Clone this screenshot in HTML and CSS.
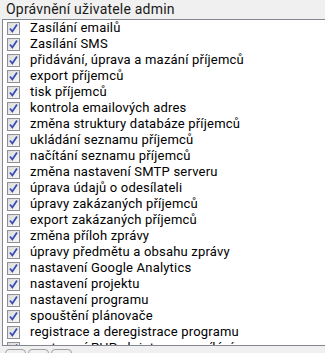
FILE: index.html
```html
<!DOCTYPE html>
<html lang="cs">
<head>
  <meta charset="UTF-8" />
  <title>Oprávnění uživatele</title>
  <link rel="stylesheet" href="styles.css">
</head>
<body>
  <div class="nadpis">Oprávnění uživatele admin</div>

  <div class="seznam">
    <div class="polozka"><span class="zaskrt"><svg viewBox="0 0 11 11"><path d="M2 5.5 L4.3 8.5 L9 1.5" /></svg></span>Zasílání emailů</div>
    <div class="polozka"><span class="zaskrt"><svg viewBox="0 0 11 11"><path d="M2 5.5 L4.3 8.5 L9 1.5" /></svg></span>Zasílání SMS</div>
    <div class="polozka"><span class="zaskrt"><svg viewBox="0 0 11 11"><path d="M2 5.5 L4.3 8.5 L9 1.5" /></svg></span>přidávání, úprava a mazání příjemců</div>
    <div class="polozka"><span class="zaskrt"><svg viewBox="0 0 11 11"><path d="M2 5.5 L4.3 8.5 L9 1.5" /></svg></span>export příjemců</div>
    <div class="polozka"><span class="zaskrt"><svg viewBox="0 0 11 11"><path d="M2 5.5 L4.3 8.5 L9 1.5" /></svg></span>tisk příjemců</div>
    <div class="polozka"><span class="zaskrt"><svg viewBox="0 0 11 11"><path d="M2 5.5 L4.3 8.5 L9 1.5" /></svg></span>kontrola emailových adres</div>
    <div class="polozka"><span class="zaskrt"><svg viewBox="0 0 11 11"><path d="M2 5.5 L4.3 8.5 L9 1.5" /></svg></span>změna struktury databáze příjemců</div>
    <div class="polozka"><span class="zaskrt"><svg viewBox="0 0 11 11"><path d="M2 5.5 L4.3 8.5 L9 1.5" /></svg></span>ukládání seznamu příjemců</div>
    <div class="polozka"><span class="zaskrt"><svg viewBox="0 0 11 11"><path d="M2 5.5 L4.3 8.5 L9 1.5" /></svg></span>načítání seznamu příjemců</div>
    <div class="polozka"><span class="zaskrt"><svg viewBox="0 0 11 11"><path d="M2 5.5 L4.3 8.5 L9 1.5" /></svg></span>změna nastavení SMTP serveru</div>
    <div class="polozka"><span class="zaskrt"><svg viewBox="0 0 11 11"><path d="M2 5.5 L4.3 8.5 L9 1.5" /></svg></span>úprava údajů o odesílateli</div>
    <div class="polozka"><span class="zaskrt"><svg viewBox="0 0 11 11"><path d="M2 5.5 L4.3 8.5 L9 1.5" /></svg></span>úpravy zakázaných příjemců</div>
    <div class="polozka"><span class="zaskrt"><svg viewBox="0 0 11 11"><path d="M2 5.5 L4.3 8.5 L9 1.5" /></svg></span>export zakázaných příjemců</div>
    <div class="polozka"><span class="zaskrt"><svg viewBox="0 0 11 11"><path d="M2 5.5 L4.3 8.5 L9 1.5" /></svg></span>změna příloh zprávy</div>
    <div class="polozka"><span class="zaskrt"><svg viewBox="0 0 11 11"><path d="M2 5.5 L4.3 8.5 L9 1.5" /></svg></span>úpravy předmětu a obsahu zprávy</div>
    <div class="polozka"><span class="zaskrt"><svg viewBox="0 0 11 11"><path d="M2 5.5 L4.3 8.5 L9 1.5" /></svg></span>nastavení Google Analytics</div>
    <div class="polozka"><span class="zaskrt"><svg viewBox="0 0 11 11"><path d="M2 5.5 L4.3 8.5 L9 1.5" /></svg></span>nastavení projektu</div>
    <div class="polozka"><span class="zaskrt"><svg viewBox="0 0 11 11"><path d="M2 5.5 L4.3 8.5 L9 1.5" /></svg></span>nastavení programu</div>
    <div class="polozka"><span class="zaskrt"><svg viewBox="0 0 11 11"><path d="M2 5.5 L4.3 8.5 L9 1.5" /></svg></span>spouštění plánovače</div>
    <div class="polozka"><span class="zaskrt"><svg viewBox="0 0 11 11"><path d="M2 5.5 L4.3 8.5 L9 1.5" /></svg></span>registrace a deregistrace programu</div>
    <div class="polozka"><span class="zaskrt"><svg viewBox="0 0 11 11"><path d="M2 5.5 L4.3 8.5 L9 1.5" /></svg></span>nastavení PHP skriptu pro zasílání</div>
  </div>

  <div class="tlacitka">
    <span class="tl"></span>
    <span class="tl"></span>
    <span class="tl"></span>
  </div>
</body>
</html>
```

FILE: styles.css
```css
body {
  margin: 0;
  background: #f0f0f0;
  font-family: Roboto, "Noto Sans", sans-serif;
  font-size: 13px;
  letter-spacing: 0.2px;
  color: #000;
  height: 353px;
  overflow: hidden;
}

.nadpis {
  height: 19px;
  line-height: 19px;
  padding-left: 6px;
  font-size: 14px;
  color: #1a1a1a;
}

.seznam {
  margin-left: 2px;
  height: 327px;
  box-sizing: border-box;
  border: 1px solid #828790;
  border-right: none;
  background: #fff;
  overflow: hidden;
}

.polozka {
  display: flex;
  align-items: center;
  height: 16px;
  line-height: 16px;
  padding-left: 4px;
  white-space: nowrap;
}

.zaskrt {
  width: 13px;
  height: 13px;
  box-sizing: border-box;
  border: 1px solid #8e8f8f;
  background: linear-gradient(to bottom right, #dcdcdc, #f7f7f7);
  margin-right: 10px;
  flex-shrink: 0;
  display: flex;
  align-items: center;
  justify-content: center;
}

.zaskrt svg {
  width: 11px;
  height: 11px;
}

.zaskrt path {
  fill: none;
  stroke: #3c4fb0;
  stroke-width: 1.8;
}

.tlacitka {
  display: flex;
  gap: 2px;
  padding: 3px 0 0 5px;
}

.tl {
  width: 21px;
  height: 8px;
  box-sizing: border-box;
  border: 1px solid #a0a0a0;
  border-radius: 4px;
}
```
